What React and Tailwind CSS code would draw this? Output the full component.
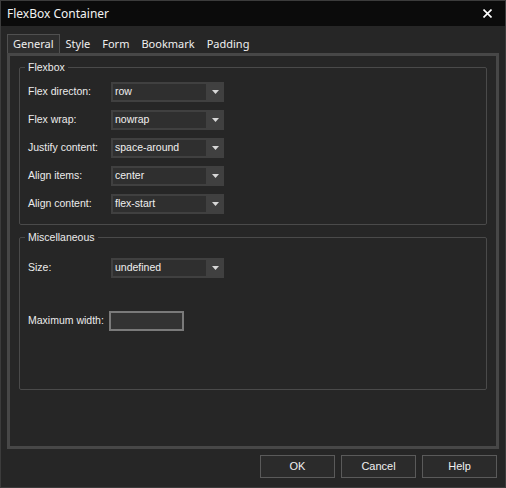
import React from 'react';

const labelFont = { fontFamily: '"Liberation Sans", Arial, sans-serif' };

function Select({ value }) {
  return (
    <div className="flex h-5 w-[113px] bg-[#404040] p-[2px] pr-0">
      <div className="flex flex-1 items-center bg-[#2f2f2f] pl-[2px] text-[10.5px] text-[#f0f0f0]">{value}</div>
      <div className="flex w-[18px] items-center justify-center">
        <svg width="7" height="4" viewBox="0 0 7 4">
          <path d="M0 0h7L3.5 4z" fill="#d8d8d8" />
        </svg>
      </div>
    </div>
  );
}

function Row({ label, children }) {
  return (
    <div className="flex items-center">
      <div className="w-[83px] text-[10.5px] text-[#ececec]">{label}</div>
      {children}
    </div>
  );
}

function Group({ title, className, children }) {
  return (
    <fieldset className={`rounded-[2px] border border-[#4a4a4a] px-2 ${className}`}>
      <legend className="-ml-[3px] px-[3px] text-[10.5px] leading-[14px] text-[#ececec]">{title}</legend>
      {children}
    </fieldset>
  );
}

function Button({ children }) {
  return (
    <button className="h-[23px] w-[75px] border border-[#5a5a5a] bg-[#2b2b2b] text-[11px] text-[#f0f0f0]">
      {children}
    </button>
  );
}

export default function App() {
  const tabs = ['General', 'Style', 'Form', 'Bookmark', 'Padding'];
  return (
    <div className="flex h-[488px] w-[506px] flex-col border border-[#3c3c3c] bg-[#262626]" style={labelFont}>
      {/* Title bar */}
      <div className="flex h-[25px] items-center justify-between bg-[#0b0b0b] pl-[6px] pr-[13px]">
        <span className="text-[12px] text-[#f2f2f2]" style={{ fontFamily: '"Noto Sans", "Open Sans", sans-serif' }}>
          FlexBox Container
        </span>
        <svg width="9" height="9" viewBox="0 0 9 9">
          <path d="M0.5 0.5l8 8M8.5 0.5l-8 8" stroke="#ffffff" strokeWidth="1.6" />
        </svg>
      </div>

      {/* Tabs */}
      <div className="mt-[9px] flex h-[18px] items-end pl-[6px]" style={{ fontFamily: '"Noto Sans", "Open Sans", sans-serif' }}>
        {tabs.map((t, i) => (
          <div
            key={t}
            className={
              i === 0
                ? 'flex h-[19px] items-center border border-b-0 border-[#505050] bg-[#2e2e2e] px-[5px] text-[11px] text-[#f0f0f0]'
                : 'flex h-[18px] items-center px-[6px] text-[11px] text-[#f0f0f0]'
            }
          >
            {t}
          </div>
        ))}
      </div>

      {/* Tab panel */}
      <div className="mx-[6px] flex h-[396px] w-[492px] flex-col gap-[5px] border-[3px] border-[#474747] px-[9px] pt-[4px]">
        <Group title="Flexbox" className="h-[165px]">
          <div className="mt-[8px] flex flex-col gap-2">
            <Row label="Flex directon:"><Select value="row" /></Row>
            <Row label="Flex wrap:"><Select value="nowrap" /></Row>
            <Row label="Justify content:"><Select value="space-around" /></Row>
            <Row label="Align items:"><Select value="center" /></Row>
            <Row label="Align content:"><Select value="flex-start" /></Row>
          </div>
        </Group>
        <Group title="Miscellaneous" className="h-[160px]">
          <div className="mt-[14px] flex flex-col gap-[33px]">
            <Row label="Size:"><Select value="undefined" /></Row>
            <div className="flex items-center">
              <div className="w-[81px] text-[10.5px] text-[#ececec]">Maximum width:</div>
              <div className="h-5 w-[75px] border-2 border-[#7a7a7a] bg-[#333333]" />
            </div>
          </div>
        </Group>
      </div>

      {/* Buttons */}
      <div className="mt-[6px] flex justify-end gap-[6px] pr-[8px]">
        <Button>OK</Button>
        <Button>Cancel</Button>
        <Button>Help</Button>
      </div>
    </div>
  );
}
